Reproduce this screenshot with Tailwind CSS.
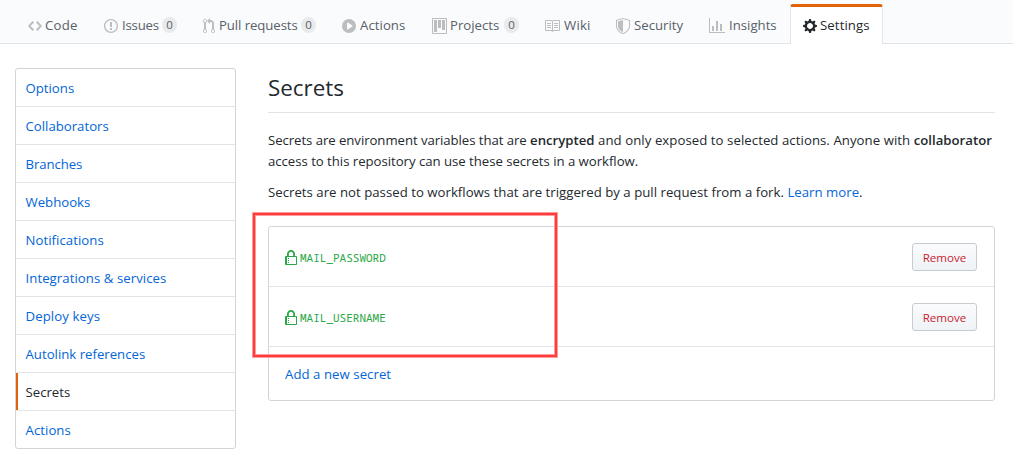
<!DOCTYPE html>
<html lang="en">
<head>
<meta charset="utf-8">
<title>Secrets</title>
<script src="https://cdn.jsdelivr.net/npm/@tailwindcss/browser@4"></script>
</head>
<body class="relative h-[458px] w-[1013px] overflow-hidden bg-white font-['Open_Sans','Noto_Sans',sans-serif] text-[13.2px] leading-[21px] text-[#24292e]">
<nav class="flex h-11 items-end border-b border-[#e1e4e8] bg-[#fafbfc] pl-7 text-[#586069]">
  <a class="flex h-9 w-[76px] items-start gap-[3px]"><svg class="mt-[11px] w-3.5 h-4 shrink-0 fill-[#bbbdbf]" viewBox="0 0 14 16"><path fill-rule="evenodd" d="M9.5 3L8 4.5 11.5 8 8 11.5 9.5 13 14 8 9.5 3zm-5 0L0 8l4.5 5L6 11.5 2.5 8 6 4.5 4.5 3z"/></svg><span class="mt-2 tracking-[0.2px]">Code</span></a>
  <a class="flex h-9 w-[99px] items-start gap-1"><svg class="mt-[11px] w-3.5 h-4 shrink-0 fill-[#bbbdbf]" viewBox="0 0 14 16"><path fill-rule="evenodd" d="M7 2.3c3.14 0 5.7 2.56 5.7 5.7s-2.56 5.7-5.7 5.7A5.71 5.71 0 0 1 1.3 8c0-3.14 2.56-5.7 5.7-5.7zM7 1C3.14 1 0 4.14 0 8s3.14 7 7 7 7-3.14 7-7-3.14-7-7-7zm1 3H6v5h2V4zm0 6H6v2h2v-2z"/></svg><span class="mt-2 w-9 tracking-[-0.2px]">Issues</span><span class="mt-2.5 h-4 w-[15px] rounded-full bg-[#e8eaeb] text-center text-[11.5px] leading-4 font-medium">0</span></a>
  <a class="flex h-9 w-[139px] items-start gap-1"><svg class="mt-[11px] w-3 h-4 shrink-0 fill-[#bbbdbf]" viewBox="0 0 12 16"><path fill-rule="evenodd" d="M11 11.28V5c-.03-.78-.34-1.47-.94-2.06C9.46 2.35 8.78 2.03 8 2H7V0L4 3l3 3V4h1c.27.02.48.11.69.31.21.2.3.42.31.69v6.28A1.993 1.993 0 0 0 10 15a1.993 1.993 0 0 0 1-3.72zm-1 2.92c-.66 0-1.2-.55-1.2-1.2 0-.65.55-1.2 1.2-1.2.65 0 1.2.55 1.2 1.2 0 .65-.55 1.2-1.2 1.2zM4 3c0-1.11-.89-2-2-2a1.993 1.993 0 0 0-1 3.72v6.56A1.993 1.993 0 0 0 2 15a1.993 1.993 0 0 0 1-3.72V4.72c.59-.34 1-.98 1-1.72zm-.8 10c0 .66-.55 1.2-1.2 1.2-.65 0-1.2-.55-1.2-1.2 0-.65.55-1.2 1.2-1.2.65 0 1.2.55 1.2 1.2zM2 4.2C1.34 4.2.8 3.65.8 3c0-.65.55-1.2 1.2-1.2.65 0 1.2.55 1.2 1.2 0 .65-.55 1.2-1.2 1.2z"/></svg><span class="mt-2 w-[78px] whitespace-nowrap tracking-[-0.08px]">Pull requests</span><span class="mt-2.5 h-4 w-[15px] rounded-full bg-[#e8eaeb] text-center text-[11.5px] leading-4 font-medium">0</span></a>
  <a class="flex h-9 w-[90px] items-start gap-1"><svg class="mt-[11px] w-3.5 h-4 shrink-0 fill-[#bbbdbf]" viewBox="0 0 14 16"><path fill-rule="evenodd" d="M14 8A7 7 0 1 1 0 8a7 7 0 0 1 14 0zm-8.223 3.482l4.599-3.066a.5.5 0 0 0 0-.832L5.777 4.518A.5.5 0 0 0 5 4.934v6.132a.5.5 0 0 0 .777.416z"/></svg><span class="mt-2 tracking-[0.05px]">Actions</span></a>
  <a class="flex h-9 w-[112px] items-start gap-[3px]"><svg class="mt-[11px] w-[15px] h-4 shrink-0 fill-[#bbbdbf]" viewBox="0 0 15 16"><path fill-rule="evenodd" d="M10 12h3V2h-3v10zm-4-2h3V2H6v8zm-4 4h3V2H2v12zm-1 1h13V1H1v14zM14 0H1a1 1 0 0 0-1 1v14a1 1 0 0 0 1 1h13a1 1 0 0 0 1-1V1a1 1 0 0 0-1-1z"/></svg><span class="mt-2 w-[50px]">Projects</span><span class="mt-2.5 ml-px h-4 w-[15px] rounded-full bg-[#e8eaeb] text-center text-[11.5px] leading-4 font-medium">0</span></a>
  <a class="flex h-9 w-[72px] items-start gap-[3px]"><svg class="mt-[11px] w-4 h-4 shrink-0 fill-[#bbbdbf]" viewBox="0 0 16 16"><path fill-rule="evenodd" d="M3 5h4v1H3V5zm0 3h4V7H3v1zm0 2h4V9H3v1zm11-5h-4v1h4V5zm0 2h-4v1h4V7zm0 2h-4v1h4V9zm2-6v9c0 .55-.45 1-1 1H9.5l-1 1-1-1H2c-.55 0-1-.45-1-1V3c0-.55.45-1 1-1h5.5l1 1 1-1H15c.55 0 1 .45 1 1zm-8 .5L7.5 3H2v9h6V3.5zm7-.5H9.5l-.5.5V12h6V3z"/></svg><span class="mt-2 ml-px tracking-[0.2px]">Wiki</span></a>
  <a class="flex h-9 w-[93px] items-start gap-1"><svg class="mt-[11px] w-3.5 h-4 shrink-0 fill-[#bbbdbf]" viewBox="0 0 14 16"><path fill-rule="evenodd" d="M0 2l7-2 7 2v6.02C14 12.69 8.69 16 7 16c-1.69 0-7-3.31-7-7.98V2zm1 .75L7 1l6 1.75v5.268C13 12.104 8.449 15 7 15c-1.449 0-6-2.896-6-6.982V2.75zm1 .75L7 2v12c-1.207 0-5-2.482-5-5.985V3.5z"/></svg><span class="mt-2">Security</span></a>
  <a class="flex h-9 w-[81px] items-start gap-1"><svg class="mt-[11px] w-4 h-4 shrink-0 fill-[#bbbdbf]" viewBox="0 0 16 16"><path fill-rule="evenodd" d="M16 14v1H0V0h1v14h15zM5 13H3V8h2v5zm4 0H7V3h2v10zm4 0h-2V6h2v7z"/></svg><span class="mt-2">Insights</span></a>
  <a class="-mb-px flex h-10 w-[93px] items-start gap-1 rounded-t-[3px] border-x border-t-[3px] border-x-[#e1e4e8] border-t-[#e36209] bg-white pl-3 text-[#24292e]"><svg class="mt-[11px] w-3.5 h-4 shrink-0 fill-[#24292e]" viewBox="0 0 14 16"><path fill-rule="evenodd" d="M14 8.77v-1.6l-1.94-.64-.45-1.09.88-1.84-1.13-1.13-1.81.91-1.09-.45-.69-1.92h-1.6l-.63 1.94-1.11.45-1.84-.88-1.13 1.13.91 1.81-.45 1.09L0 7.23v1.59l1.94.64.45 1.09-.88 1.84 1.13 1.13 1.81-.91 1.09.45.69 1.92h1.59l.63-1.94 1.11-.45 1.84.88 1.13-1.13-.92-1.81.47-1.09L14 8.75v.02zM7 11c-1.66 0-3-1.34-3-3s1.34-3 3-3 3 1.34 3 3-1.34 3-3 3z"/></svg><span class="mt-2 -ml-px tracking-[0.1px]">Settings</span></a>
</nav>
<div class="flex gap-8 pt-6 pl-[15px]">
  <aside class="flex h-[381px] w-[221px] shrink-0 flex-col divide-y divide-[#e1e4e8] overflow-hidden rounded-[3px] border border-[#d1d5da] text-[#0366d6]">
    <a class="h-[38px] pt-[9px] pl-[9.5px]">Options</a>
    <a class="h-[38px] pt-[9px] pl-[9.5px]">Collaborators</a>
    <a class="h-[38px] pt-[9px] pl-[9.5px] tracking-[-0.1px]">Branches</a>
    <a class="h-[38px] pt-[9px] pl-[9.5px]">Webhooks</a>
    <a class="h-[38px] pt-[9px] pl-[9.5px] tracking-[0.05px]">Notifications</a>
    <a class="h-[38px] pt-[9px] pl-[9.5px] tracking-[0.06px]">Integrations &amp; services</a>
    <a class="h-[38px] pt-[9px] pl-[9.5px] tracking-[0.1px]">Deploy keys</a>
    <a class="h-[38px] pt-[9px] pl-[9.5px]">Autolink references</a>
    <a class="flex h-[38px]"><span class="w-0.5 bg-[#e36209]"></span><span class="pt-[9px] pl-[7.5px] font-medium text-[#24292e]">Secrets</span></a>
    <a class="h-[37px] pt-[9px] pl-[9.5px] tracking-[0.05px]">Actions</a>
  </aside>
  <main class="w-[727px]">
    <h2 class="h-[45px] border-b border-[#e1e4e8] pt-1 text-[22.4px] leading-8">Secrets</h2>
    <p class="mt-[17px] whitespace-nowrap"><span class="tracking-[-0.06px]">Secrets are environment variables that are </span><b class="font-semibold">encrypted</b><span class="tracking-[0.06px]"> and only exposed to selected actions. Anyone with </span><b class="font-semibold">collaborator</b><br><span class="tracking-[-0.03px]">access to this repository can use these secrets in a workflow.</span></p>
    <p class="mt-2.5 whitespace-nowrap tracking-[0.02px]">Secrets are not passed to workflows that are triggered by a pull request from a fork. <a class="text-[#0366d6]">Learn more</a>.</p>
    <section class="mt-[23px] h-[175px] divide-y divide-[#e1e4e8] rounded-[3px] border border-[#d1d5da]">
      <div class="flex h-[60px] items-center pr-[17px] pl-4"><svg class="mt-[3px] h-4 w-3.5 shrink-0 fill-[#28a745]" viewBox="0 0 14 16"><path fill-rule="evenodd" d="M4 13H3v-1h1v1zm8-6v7c0 .55-.45 1-1 1H1c-.55 0-1-.45-1-1V7c0-.55.45-1 1-1h1V4c0-2.2 1.8-4 4-4s4 1.8 4 4v2h1c.55 0 1 .45 1 1zM3.8 6h4.41V4c0-1.22-.98-2.2-2.2-2.2-1.22 0-2.2.98-2.2 2.2v2H3.8zM11 7H2v7h9V7zM4 8H3v1h1V8zm0 2H3v1h1v-1z"/></svg><span class="mt-0.5 ml-px grow font-['Noto_Sans_Mono','DejaVu_Sans_Mono',monospace] text-[11px] text-[#28a745]">MAIL_PASSWORD</span><button class="h-7 w-[65px] rounded-[3px] border border-[#c9cccf] bg-linear-to-b from-[#fafbfc] to-[#eff3f6] pt-0.5 text-[11.6px] leading-5 font-medium text-[#cb2431]">Remove</button></div>
      <div class="flex h-[60px] items-center pr-[17px] pl-4"><svg class="mt-[3px] h-4 w-3.5 shrink-0 fill-[#28a745]" viewBox="0 0 14 16"><path fill-rule="evenodd" d="M4 13H3v-1h1v1zm8-6v7c0 .55-.45 1-1 1H1c-.55 0-1-.45-1-1V7c0-.55.45-1 1-1h1V4c0-2.2 1.8-4 4-4s4 1.8 4 4v2h1c.55 0 1 .45 1 1zM3.8 6h4.41V4c0-1.22-.98-2.2-2.2-2.2-1.22 0-2.2.98-2.2 2.2v2H3.8zM11 7H2v7h9V7zM4 8H3v1h1V8zm0 2H3v1h1v-1z"/></svg><span class="mt-0.5 ml-px grow font-['Noto_Sans_Mono','DejaVu_Sans_Mono',monospace] text-[11px] text-[#28a745]">MAIL_USERNAME</span><button class="h-7 w-[65px] rounded-[3px] border border-[#c9cccf] bg-linear-to-b from-[#fafbfc] to-[#eff3f6] pt-0.5 text-[11.6px] leading-5 font-medium text-[#cb2431]">Remove</button></div>
      <div class="pt-[17px] pl-4 tracking-[0.05px] text-[#0366d6]">Add a new secret</div>
    </section>
  </main>
</div>
<div class="absolute top-[212px] left-[252px] h-[146px] w-[306px] border-4 border-[#ff9c9c]"><div class="absolute -inset-[3px] border-2 border-[#ff3b3b]"></div></div>
</body>
</html>
